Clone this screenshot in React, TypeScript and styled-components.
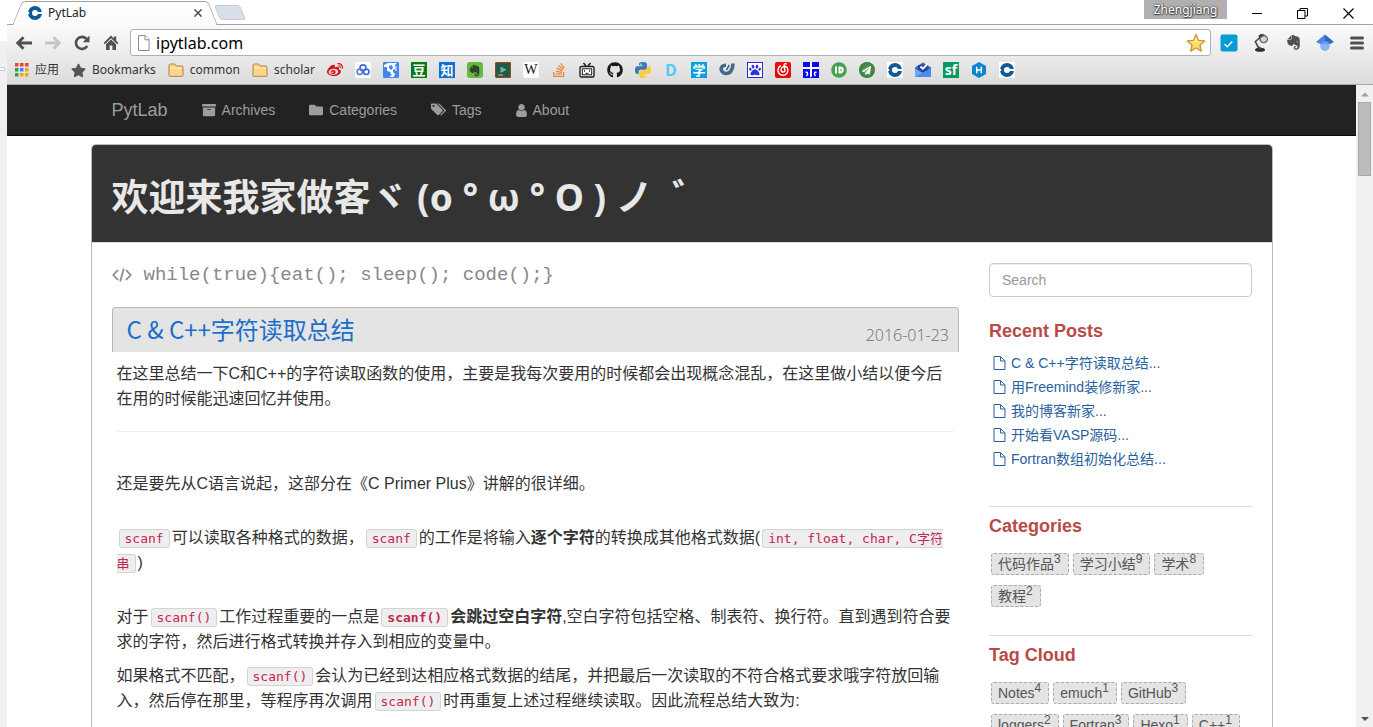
import React from "react";
import styled, { createGlobalStyle } from "styled-components";
import {
  FaArchive,
  FaEvernote,
  FaFolder,
  FaGithub,
  FaPaw,
  FaPaperPlane,
  FaStackOverflow,
  FaStar,
  FaWeibo,
} from "react-icons/fa";

const uiFont = '"Noto Sans", "Noto Sans CJK SC", sans-serif';
const pageFont = '"Liberation Sans", "Noto Sans CJK SC", sans-serif';
const monoFont = '"DejaVu Sans Mono", "Noto Sans CJK SC", monospace';

const GlobalStyle = createGlobalStyle`
  * { box-sizing: border-box; }
  body { margin: 0; background: #fff; font-family: ${pageFont}; overflow: hidden; }
  a { text-decoration: none; }
  svg { display: block; flex: none; }
`;

/* ---------- window ---------- */

const Desktop = styled.div`
  display: flex;
  height: 100vh;
`;

const DesktopEdge = styled.div`
  flex: none;
  width: 7px;
  padding-top: 67px;
  background: linear-gradient(#fff 41px, #f0f0f0 41px);
`;

const EdgeHandle = styled.div`
  width: 5px;
  height: 4px;
  background: #fff;
  border: 1px solid #ccc;
  border-left: 0;
`;

const Window = styled.div`
  flex: 1;
  min-width: 0;
  display: flex;
  flex-direction: column;
`;

const TitleBar = styled.div`
  display: flex;
  height: 24px;
  padding: 0 2px 0 10px;
`;

const Tab = styled.div`
  position: relative;
  z-index: 1;
  display: flex;
  align-items: center;
  width: 196px;
  height: 25px;
  padding: 1px 11px 0 10px;
  font: 12px/20px ${uiFont};
  color: #222;

  &::before,
  &::after {
    content: "";
    position: absolute;
    z-index: -1;
    top: 1px;
    bottom: 0;
    width: 60%;
    background: linear-gradient(#fff, #fbfbfb);
    border-top: 1px solid #a3a3a3;
  }
  &::before {
    left: 0;
    border-left: 1px solid #a3a3a3;
    border-top-left-radius: 4px;
    transform: skewX(-22deg);
  }
  &::after {
    right: 0;
    border-right: 1px solid #a3a3a3;
    border-top-right-radius: 4px;
    transform: skewX(22deg);
  }
`;

const TabTitle = styled.span`
  flex: 1;
  margin-left: 5px;
`;

const PlainButton = styled.button`
  display: flex;
  align-items: center;
  justify-content: center;
  padding: 0;
  border: 0;
  background: none;
  color: #4a4a4a;
`;

const NewTab = styled.button`
  width: 26px;
  height: 15px;
  margin: 5px 0 0 4px;
  padding: 0;
  border: 1px solid #c6ccd4;
  border-radius: 3px;
  background: #d9dfe8;
  transform: skewX(22deg);
`;

const UserBadge = styled.button`
  width: 83px;
  height: 19px;
  margin-left: auto;
  padding: 0;
  border: 0;
  background: #b0b0b0;
  color: #fff;
  font: 12px/19px ${uiFont};
  text-shadow: 0 0 2px #333, 0 1px 1px #444, 1px 0 1px #555;
`;

const WindowButtons = styled.div`
  display: flex;
  height: 26px;
  margin-left: 6px;
`;

const WindowButton = styled(PlainButton)`
  width: 46px;
  color: #000;
`;

const Toolbar = styled.div`
  flex: none;
  height: 61px;
  border-top: 1px solid #a3a3a3;
  border-bottom: 1px solid #a8a8a8;
  background: linear-gradient(#fafafa, #dcdcdc);
`;

const AddressRow = styled.div`
  display: flex;
  align-items: center;
  height: 35px;
  padding: 0 7px 0 8px;
`;

const NavButtons = styled.div`
  display: flex;
  gap: 11px;
  margin-right: 10px;
`;

const ToolButton = styled(PlainButton)<{ $faded?: boolean }>`
  width: 18px;
  height: 18px;
  color: ${(p) => (p.$faded ? "#c4c4c4" : "#505050")};
`;

const Omnibox = styled.div`
  flex: 1;
  display: flex;
  align-items: center;
  height: 27px;
  padding: 0 4px 0 7px;
  background: #fff;
  border: 1px solid #b0b0b0;
  border-radius: 3px;
`;

const Address = styled.input`
  flex: 1;
  min-width: 0;
  margin-left: 6px;
  padding: 0;
  border: 0;
  outline: 0;
  background: none;
  color: #000;
  font: 16px/24px ${uiFont};
`;

const Extensions = styled.div`
  display: flex;
  gap: 14px;
  margin-left: 9px;
`;

const BookmarkRow = styled.div`
  display: flex;
  align-items: center;
  gap: 12px;
  height: 20px;
  padding-left: 8px;
`;

const Bookmark = styled.a`
  display: flex;
  align-items: center;
  gap: 6px;
  color: #333;
  font: 12px/18px ${uiFont};
`;

const Favicon = styled.a<{ $bg?: string; $fg?: string; $size?: number; $serif?: boolean; $round?: number }>`
  flex: none;
  display: flex;
  align-items: center;
  justify-content: center;
  width: 16px;
  height: 16px;
  border-radius: ${(p) => p.$round ?? 0}px;
  background: ${(p) => p.$bg ?? "transparent"};
  color: ${(p) => p.$fg ?? "#fff"};
  font: ${(p) => (p.$serif ? "normal" : "bold")} ${(p) => p.$size ?? 13}px/16px
    ${(p) => (p.$serif ? '"Liberation Serif", serif' : '"Noto Sans", "Noto Sans CJK SC", sans-serif')};
`;

/* ---------- page ---------- */

const Viewport = styled.div`
  flex: 1;
  min-height: 0;
  display: flex;
`;

const Page = styled.div`
  flex: 1;
  min-width: 0;
  overflow: hidden;
`;

const ScrollTrack = styled.div`
  flex: none;
  display: flex;
  flex-direction: column;
  align-items: center;
  width: 17px;
  padding: 6px 0 5px;
  background: #f1f1f1;
`;

const ScrollThumb = styled.div`
  width: 13px;
  height: 74px;
  margin: 4px 0 auto;
  background: #bcbcbc;
  border: 1px solid #a8a8a8;
`;

const Container = styled.div`
  max-width: 1182px;
  margin: 0 auto;
`;

const SiteNav = styled.nav`
  height: 51px;
  background: #222;
  border-bottom: 1px solid #080808;
`;

const NavRow = styled(Container)`
  display: flex;
  align-items: center;
  gap: 34px;
  height: 50px;
  padding: 0 21px;
`;

const Brand = styled.a`
  color: #9d9d9d;
  font-size: 18px;
  line-height: 20px;
`;

const NavLink = styled.a`
  display: flex;
  align-items: center;
  gap: 6px;
  color: #9d9d9d;
  font-size: 14px;
  line-height: 20px;
`;

const Panel = styled(Container)`
  margin-top: 8px;
  border: 1px solid #bbb;
  border-radius: 5px 5px 0 0;
`;

const Hero = styled.header`
  height: 98px;
  padding: 25px 20px 0;
  background: #333;
  border-bottom: 1px solid #ddd;
  border-radius: 4px 4px 0 0;
`;

const HeroTitle = styled.h1`
  margin: 0;
  color: #e8e8e8;
  font: bold 37px/54px "Noto Sans", "Noto Sans CJK SC", sans-serif;
  white-space: pre;
`;

const Columns = styled.div`
  display: grid;
  grid-template-columns: 3fr 1fr;
  padding: 20px 5px 0;
`;

const Main = styled.main`
  min-width: 0;
  padding: 0 15px;
`;

const Sidebar = styled.aside`
  min-width: 0;
  padding: 0 15px;
`;

const Motto = styled.div`
  display: flex;
  align-items: center;
  gap: 12px;
  height: 24px;
  color: #888;
  font: 19px/24px "Liberation Mono", monospace;
`;

const PostHead = styled.header`
  display: flex;
  justify-content: space-between;
  height: 45px;
  margin-top: 20px;
  padding: 0 9px 0 14px;
  background: #e4e4e4;
  border: 1px solid #b8b8b8;
  border-bottom: 0;
  border-radius: 4px 4px 0 0;
`;

const PostTitle = styled.h2`
  margin: 0;
  font: normal 24px/42px "Noto Sans CJK SC", sans-serif;

  a { color: #1a6fca; }
`;

const PostDate = styled.time`
  margin-top: 14px;
  color: #6c6c6c;
  font: 300 16px/26px "Open Sans", sans-serif;
`;

const PostBody = styled.div`
  padding: 9px 5px 0;
  color: #333;
  font-size: 16px;
  line-height: 25px;
`;

const Para = styled.p<{ $after?: number }>`
  margin: 0 0 ${(p) => p.$after ?? 9}px;
`;

const Rule = styled.hr`
  margin: 20px 0 39px;
  border: 0;
  border-top: 1px solid #eee;
`;

const Code = styled.code`
  margin: 0 2px;
  padding: 1px 5px;
  border: 1px solid #d4d4d4;
  border-radius: 3px;
  background: #eee;
  color: #c7254e;
  font-family: ${monoFont};
  font-size: 13px;
  line-height: 16px;
`;

const Search = styled.input`
  display: block;
  width: 100%;
  height: 34px;
  padding: 6px 12px;
  border: 1px solid #ccc;
  border-radius: 4px;
  box-shadow: inset 0 1px 1px rgba(0, 0, 0, 0.075);
  font: 14px/20px ${pageFont};

  &::placeholder { color: #999; }
`;

const Widget = styled.section<{ $ruled?: boolean }>`
  margin-top: ${(p) => (p.$ruled ? 0 : 24)}px;
  border-top: ${(p) => (p.$ruled ? "1px solid #ddd" : "0")};
  padding-top: ${(p) => (p.$ruled ? 9 : 0)}px;
`;

const WidgetTitle = styled.h4`
  margin: 0;
  color: #b94a48;
  font-size: 18px;
  line-height: 20px;
`;

const PostList = styled.ul`
  margin: 10px 0 35px;
  padding: 0 0 0 4px;
  list-style: none;
`;

const PostLink = styled.a`
  display: flex;
  align-items: center;
  gap: 5px;
  height: 24px;
  color: #2a5f9e;
  font-size: 14px;
  line-height: 24px;
`;

const TagList = styled.div`
  display: flex;
  flex-wrap: wrap;
  gap: 10px 4px;
  padding: 17px 2px 28px;
`;

const Tag = styled.a`
  height: 22px;
  padding: 0 7px 0 6px;
  border: 1px dashed #aaa;
  border-radius: 3px;
  background: #e4e4e4;
  color: #555;
  font-size: 14px;
  line-height: 20px;

  sup { font-size: 12px; line-height: 0; }
`;

/* ---------- drawings ---------- */

const RingLogo = ({ size = 16 }: { size?: number }) => (
  <svg width={size} height={size} viewBox="0 0 16 16">
    <rect width="16" height="16" fill="#fff" />
    <circle cx="8" cy="8" r="5" fill="none" stroke="#0b5a96" strokeWidth="4" />
    <path d="M0 7h2.200v2H0zM10 7h6v2h-6z" fill="#fff" />
  </svg>
);

const ArrowIcon = ({ flip }: { flip?: boolean }) => (
  <svg width="18" height="18" viewBox="0 0 18 18" fill="none" stroke="currentColor" strokeWidth="2.800">
    <path d={flip ? "M1 9h14M9.500 3.200L15.300 9l-5.800 5.800" : "M17 9H3M8.500 3.200L2.700 9l5.800 5.800"} />
  </svg>
);

const ReloadIcon = () => (
  <svg width="18" height="18" viewBox="0 0 18 18">
    <path d="M14.200 11.800A6 6 0 1 1 13.400 4.800" fill="none" stroke="currentColor" strokeWidth="2.600" />
    <path d="M16.500 1.500v6.800H9.700z" fill="currentColor" />
  </svg>
);

const HomeIcon = () => (
  <svg width="18" height="18" viewBox="0 0 18 18" fill="currentColor">
    <path d="M9 1.600L1.600 9l1.200 1.300L9 4.300l6.200 6 1.200-1.300-2.200-2.200V2.600h-2.400v1.800z" />
    <path d="M4 10.300l5-4.700 5 4.700V16h-3.600v-4.400H7.600V16H4z" />
  </svg>
);

const PageIcon = () => (
  <svg width="12" height="16" viewBox="0 0 12 16" fill="#fff" stroke="#8a8a8a">
    <path d="M.5.5h6.600l4 4v11H.5z" />
    <path d="M7 .5v4.300h4.200" />
  </svg>
);

const GoldStar = () => (
  <svg width="20" height="20" viewBox="0 0 20 20">
    <defs>
      <linearGradient id="gold" x1="0" y1="0" x2="0" y2="1">
        <stop offset="0" stopColor="#fff6b0" />
        <stop offset="1" stopColor="#f9cf45" />
      </linearGradient>
    </defs>
    <path
      d="M10 1.600l2.500 5.700 6.100.6-4.600 4.100 1.300 6.100-5.300-3.100-5.300 3.100L6 12 1.400 7.900l6.100-.6z"
      fill="url(#gold)"
      stroke="#cf922f"
      strokeWidth="1.300"
      strokeLinejoin="round"
    />
  </svg>
);

const CheckExt = () => (
  <svg width="18" height="18" viewBox="0 0 18 18">
    <rect x=".5" y=".5" width="17" height="17" rx="2" fill="#0a9bd3" />
    <path d="M4.500 10l2.800 2.800 5-5.300" fill="none" stroke="#fff" strokeWidth="1.400" />
  </svg>
);

const LampExt = () => (
  <svg width="18" height="20" viewBox="0 0 18 20">
    <path d="M7 15.500L3.300 8.600 9 3.500" fill="none" stroke="#4c4c4c" strokeWidth="1.600" />
    <path d="M6.500 2.500l3-1.800 4 1.300-2 6.500-4-2.600z" fill="#3c3c3c" />
    <ellipse cx="11.800" cy="6.300" rx="3.700" ry="3.300" fill="#d4d4d4" stroke="#6a6a6a" strokeWidth="1.400" transform="rotate(-20 11.800 6.300)" />
    <ellipse cx="8" cy="16.800" rx="5" ry="2" fill="#2d2d2d" />
    <path d="M6 14l3 1.300" stroke="#555" strokeWidth="2" />
  </svg>
);

const ScholarExt = () => (
  <svg width="18" height="18" viewBox="0 0 18 18">
    <path d="M9 .5L0 8l5 2.500L9 9z" fill="#4b84ee" />
    <path d="M9 .5L18 8l-5 2.500L9 9z" fill="#3567c5" />
    <circle cx="9" cy="12.200" r="4.800" fill="#8db5f5" />
    <path d="M4.600 10.200a4.900 4.900 0 0 1 8.800 0z" fill="#6c9df2" />
  </svg>
);

const MenuIcon = () => (
  <svg width="14" height="14" viewBox="0 0 14 14" stroke="#505050" strokeWidth="3" strokeLinecap="round">
    <path d="M1.500 2h11M1.500 7h11M1.500 12h11" />
  </svg>
);

const AppsIcon = () => {
  const colors = ["#e8453c", "#e8453c", "#e8453c", "#2e9e57", "#3f83f0", "#f2a60c", "#2e9e57", "#f2a60c", "#f2a60c"];
  return (
    <svg width="14" height="14" viewBox="0 0 14 14">
      {colors.map((c, i) => (
        <rect key={i} x={(i % 3) * 5} y={Math.floor(i / 3) * 5} width="3.500" height="3.500" fill={c} />
      ))}
    </svg>
  );
};

const FolderIcon = () => (
  <svg width="16" height="14" viewBox="0 0 16 14">
    <path d="M1 12.500v-10q0-1.500 1.500-1.500h4q1 0 1.500 2h6q1 0 1 1v8.500q0 .8-.8.8H1.800q-.8 0-.8-.8z" fill="#fbd58a" stroke="#b58043" />
    <path d="M2 5h12" stroke="#fff0cf" />
  </svg>
);

const CloudFav = () => (
  <svg width="16" height="16" viewBox="0 0 16 16" fill="none" strokeWidth="1.600">
    <circle cx="8" cy="5.800" r="2.900" stroke="#2e6be6" />
    <circle cx="4.700" cy="9.800" r="2.700" stroke="#3f86f2" />
    <circle cx="11.300" cy="9.800" r="2.700" stroke="#2e6be6" />
    <circle cx="6.600" cy="8" r="1.300" fill="#e5473c" />
  </svg>
);

const ScholarFav = () => (
  <svg width="16" height="16" viewBox="0 0 16 16">
    <rect width="16" height="16" rx="1" fill="#4285f4" />
    <path d="M1 3l4-2h9l-2 2v4l-2 1v2l2 2-1 3H6l3-2-2-2 1-1-4-1V5H1z" fill="#fff" />
    <path d="M6 4l3-1 1 3-2 2-2-2z" fill="#4285f4" />
    <path d="M13 4v5" stroke="#fff" />
  </svg>
);

const BoardFav = () => (
  <svg width="16" height="16" viewBox="0 0 16 16">
    <rect x=".5" y=".5" width="15" height="15" rx="1.500" fill="#1d5a49" stroke="#8c4c1d" strokeWidth="1.400" />
    <path d="M5.500 4.500l6 3.200-6 3.200z" fill="#7fae92" />
    <path d="M3 13h5" stroke="#d8c27a" />
  </svg>
);

const TvFav = () => (
  <svg width="16" height="16" viewBox="0 0 16 16" fill="none" stroke="#1a1a1a">
    <rect x="1" y="4.500" width="14" height="10.500" rx="1.500" fill="#fff" strokeWidth="1.400" />
    <rect x="3.300" y="6.800" width="9.400" height="6" />
    <path d="M4.500 1L7 4M11.500 1L9 4" strokeWidth="1.500" />
    <path d="M5.500 8.300v1.500M10.500 8.300v1.500M6.500 11.300h3" />
  </svg>
);

const snake =
  "M14.25.18l.9.2.73.26.59.3.45.32.34.34.25.34.16.33.1.3.04.26.02.2-.01.13V8.5l-.05.63-.13.55-.21.46-.26.38-.3.31-.33.25-.35.19-.35.14-.33.1-.3.07-.26.04-.21.02H8.77l-.69.05-.59.14-.5.22-.41.27-.33.32-.27.35-.2.36-.15.37-.1.35-.07.32-.04.27-.02.21v3.06H3.17l-.21-.03-.28-.07-.32-.12-.35-.18-.36-.26-.36-.36-.35-.46-.32-.59-.28-.73-.21-.88-.14-1.05-.05-1.23.06-1.22.16-1.04.24-.87.32-.71.36-.57.4-.44.42-.33.42-.24.4-.16.36-.1.32-.05.24-.01h.16l.06.01h8.16v-.83H6.18l-.01-2.75-.02-.37.05-.34.11-.31.17-.28.25-.26.31-.23.38-.2.44-.18.51-.15.58-.12.64-.1.71-.06.77-.04.84-.02 1.27.05z";

const PythonFav = () => (
  <svg width="16" height="16" viewBox="0 0 24 24">
    <path d={snake} fill="#3d7ab3" />
    <path d={snake} fill="#fdcb3c" transform="rotate(180 12 12)" />
    <circle cx="8.800" cy="3.200" r="1.100" fill="#fff" />
    <circle cx="15.200" cy="20.800" r="1.100" fill="#fff" />
  </svg>
);

const HookFav = () => (
  <svg width="16" height="16" viewBox="0 0 16 16" fill="none" stroke="#426a8c" strokeWidth="3.600">
    <path d="M7 3.200C2.500 3.200 1.500 6.500 2.600 8.800c1.800 3.600 7 3.600 9.400.2C13.500 7 14 4.500 14 1.500" />
    <path d="M7.500 8l2.800-5" strokeWidth="1.600" />
  </svg>
);

const CloudMusicFav = () => (
  <svg width="16" height="16" viewBox="0 0 16 16">
    <rect width="16" height="16" rx="2" fill="#e60a0a" />
    <g fill="none" stroke="#fff" strokeWidth="1.400">
      <path d="M6 3.700a5 5 0 1 0 5.500 1.100C10 3.700 6 4.800 6 8c0 2.600 4 2.600 4 0L9 3c0-1.500 2-1.800 2.800-.8" />
    </g>
  </svg>
);

const CrossFav = () => (
  <svg width="16" height="16" viewBox="0 0 16 16">
    <rect width="16" height="16" fill="#0a0af0" />
    <path d="M7 0h2v5h7v2H9v7q0 1.500-2 1V7H0V5h7z" fill="#fff" />
    <path d="M2.500 10.500c2-1 3 1 1 3.500M13.500 10.500c-2-1-3 1-1 3.500" fill="none" stroke="#fff" strokeWidth="1.400" />
  </svg>
);

const PushFav = () => (
  <svg width="16" height="16" viewBox="0 0 16 16">
    <circle cx="8" cy="8" r="7.800" fill="#43a251" />
    <path d="M5 4.500v7" stroke="#fff" strokeWidth="2" />
    <path d="M8.500 5.500v5h.800a2.500 2.500 0 0 0 0-5z" fill="none" stroke="#fff" strokeWidth="2" />
  </svg>
);

const InboxFav = () => (
  <svg width="16" height="16" viewBox="0 0 16 16">
    <path d="M0 5.500L8 .5l8 5V15H0z" fill="#3a5fc0" />
    <path d="M3 3h10v6l-5 2-5-2z" fill="#2a4699" />
    <path d="M5.500 4.500l2.300 2.300L12.500 2" fill="none" stroke="#fff" strokeWidth="1.800" />
    <path d="M0 6.500l8 4.500 8-4.500V15H0z" fill="#6fa8f8" />
    <path d="M0 15l8-4.500L16 6.500V15z" fill="#4a8af2" />
  </svg>
);

const HexFav = () => (
  <svg width="16" height="16" viewBox="0 0 16 16">
    <path d="M8 0l7 4v8l-7 4-7-4V4z" fill="#0e83cd" />
    <path d="M5.700 4.700v6.600M10.300 4.700v6.600M5.700 8h4.600" stroke="#fff" strokeWidth="1.500" />
  </svg>
);

const TagsIcon = () => (
  <svg width="15" height="14" viewBox="0 128 1920 1664" fill="currentColor">
    <path d="M448 448q0-53-37.5-90.5t-90.5-37.5-90.500 37.500-37.500 90.500 37.500 90.500 90.500 37.500 90.500-37.500 37.500-90.500zm1067 576q0 53-37 90l-491 492q-39 37-91 37-53 0-90-37l-715-716q-38-37-64.500-101t-26.500-117v-416q0-52 38-90t90-38h416q53 0 117 26.500t102 64.500l715 714q37 39 37 91zm384 0q0 53-37 90l-491 492q-39 37-91 37-36 0-59-14t-53-45l470-470q37-37 37-90 0-52-37-91l-715-714q-38-38-102-64.500t-117-26.500h224q53 0 117 26.500t102 64.500l715 714q37 39 37 91z" />
  </svg>
);

const UserIcon = () => (
  <svg width="11" height="13" viewBox="256 128 1280 1536" fill="currentColor">
    <path d="M1536 1399q0 109-62.500 187t-150.500 78h-854q-88 0-150.500-78t-62.500-187q0-85 8.500-160.500t31.500-152 58.500-131 94-89 134.500-34.500q131 128 313 128t313-128q76 0 134.500 34.500t94 89 58.500 131 31.500 152 8.500 160.500zm-256-887q0 159-112.500 271.500t-271.500 112.500-271.500-112.500-112.500-271.500 112.500-271.500 271.500-112.500 271.500 112.500 112.500 271.500z" />
  </svg>
);

const FileOutline = () => (
  <svg width="13" height="14" viewBox="0 0 13 14" fill="none" stroke="currentColor">
    <path d="M1 .5h6.500l4.500 4.300v8.700H1z" />
    <path d="M7.500.5v4.500H12" />
  </svg>
);

const CodeMark = () => (
  <svg width="20" height="16" viewBox="0 0 20 16" fill="none" stroke="currentColor" strokeWidth="1.700">
    <path d="M6 3L1.300 8 6 13M14 3l4.700 5-4.700 5M11.800 1.500L8.200 14.500" />
  </svg>
);

const Minimize = () => (
  <svg width="11" height="11" viewBox="0 0 11 11" stroke="#000">
    <path d="M1 5.500h10" />
  </svg>
);

const Restore = () => (
  <svg width="11" height="11" viewBox="0 0 11 11" fill="none" stroke="#000">
    <path d="M.5 2.500h7.500v8H.5zM3 2.500V.5h7.500v7.500H8" />
  </svg>
);

const Close = ({ size = 11, weight = 1.2 }: { size?: number; weight?: number }) => (
  <svg width={size} height={size} viewBox="0 0 11 11" stroke="currentColor" strokeWidth={weight}>
    <path d="M.5.5l10 10M10.500.5l-10 10" />
  </svg>
);

const Triangle = ({ down }: { down?: boolean }) => (
  <svg width="8" height="7" viewBox="0 0 8 7">
    <path d={down ? "M0 2h8L4 6z" : "M0 5.500h8L4 1.500z"} fill={down ? "#505050" : "#a3a3a3"} />
  </svg>
);

/* ---------- data ---------- */

const recentPosts = ["C & C++字符读取总结...", "用Freemind装修新家...", "我的博客新家...", "开始看VASP源码...", "Fortran数组初始化总结..."];

const categories: [string, number][] = [["代码作品", 3], ["学习小结", 9], ["学术", 8], ["教程", 2]];

const tags: [string, number][] = [
  ["Notes", 4],
  ["emuch", 1],
  ["GitHub", 3],
  ["loggers", 2],
  ["Fortran", 3],
  ["Hexo", 1],
  ["C++", 1],
];

const Tags = ({ items }: { items: [string, number][] }) => (
  <TagList>
    {items.map(([name, count]) => (
      <Tag href="#" key={name}>
        {name}
        <sup>{count}</sup>
      </Tag>
    ))}
  </TagList>
);

const Browser = () => (
  <>
    <TitleBar>
      <Tab>
        <RingLogo />
        <TabTitle>PytLab</TabTitle>
        <PlainButton aria-label="Close tab">
          <Close size={8} weight={2} />
        </PlainButton>
      </Tab>
      <NewTab aria-label="New tab" />
      <UserBadge>Zhengjiang</UserBadge>
      <WindowButtons>
        <WindowButton aria-label="Minimize"><Minimize /></WindowButton>
        <WindowButton aria-label="Restore"><Restore /></WindowButton>
        <WindowButton aria-label="Close"><Close /></WindowButton>
      </WindowButtons>
    </TitleBar>
    <Toolbar>
      <AddressRow>
        <NavButtons>
          <ToolButton aria-label="Back"><ArrowIcon /></ToolButton>
          <ToolButton aria-label="Forward" $faded><ArrowIcon flip /></ToolButton>
          <ToolButton aria-label="Reload"><ReloadIcon /></ToolButton>
          <ToolButton aria-label="Home"><HomeIcon /></ToolButton>
        </NavButtons>
        <Omnibox>
          <PageIcon />
          <Address aria-label="Address" defaultValue="ipytlab.com" />
          <PlainButton aria-label="Bookmark this page"><GoldStar /></PlainButton>
        </Omnibox>
        <Extensions>
          <ToolButton aria-label="Tasks"><CheckExt /></ToolButton>
          <ToolButton aria-label="Lamp"><LampExt /></ToolButton>
          <ToolButton aria-label="Evernote"><FaEvernote size={17} /></ToolButton>
          <ToolButton aria-label="Scholar"><ScholarExt /></ToolButton>
          <ToolButton aria-label="Menu"><MenuIcon /></ToolButton>
        </Extensions>
      </AddressRow>
      <BookmarkRow>
        <Bookmark href="#"><AppsIcon />应用</Bookmark>
        <Bookmark href="#"><FaStar size={15} color="#555" />Bookmarks</Bookmark>
        <Bookmark href="#"><FolderIcon />common</Bookmark>
        <Bookmark href="#"><FolderIcon />scholar</Bookmark>
        <Favicon href="#" aria-label="Weibo" $fg="#d8131f"><FaWeibo size={16} /></Favicon>
        <Favicon href="#" aria-label="Cloud" $bg="#fff" $round={2}><CloudFav /></Favicon>
        <Favicon href="#" aria-label="Google Scholar"><ScholarFav /></Favicon>
        <Favicon href="#" $bg="#077a17">豆</Favicon>
        <Favicon href="#" $bg="#0f6fd2">知</Favicon>
        <Favicon href="#" aria-label="Evernote" $bg="#62bb3c" $fg="#34402f" $round={3}><FaEvernote size={13} /></Favicon>
        <Favicon href="#" aria-label="Board"><BoardFav /></Favicon>
        <Favicon href="#" $bg="#fff" $fg="#111" $serif $size={14} $round={2}>W</Favicon>
        <Favicon href="#" aria-label="Stack Overflow" $fg="#ee8236"><FaStackOverflow size={16} /></Favicon>
        <Favicon href="#" aria-label="Bilibili"><TvFav /></Favicon>
        <Favicon href="#" aria-label="GitHub" $fg="#191717"><FaGithub size={16} /></Favicon>
        <Favicon href="#" aria-label="Python"><PythonFav /></Favicon>
        <Favicon href="#" $fg="#56c8f5" $size={16}>D</Favicon>
        <Favicon href="#" $bg="#0a9fe0">学</Favicon>
        <Favicon href="#" aria-label="Hook"><HookFav /></Favicon>
        <Favicon href="#" aria-label="Baidu" $bg="linear-gradient(#fff, #fff) center / 14px 14px no-repeat #2b2bdc" $fg="#2b35dc"><FaPaw size={12} /></Favicon>
        <Favicon href="#" aria-label="Music"><CloudMusicFav /></Favicon>
        <Favicon href="#" aria-label="Library"><CrossFav /></Favicon>
        <Favicon href="#" aria-label="Pushbullet"><PushFav /></Favicon>
        <Favicon href="#" aria-label="Send" $bg="radial-gradient(#5aa85a, #2a6b2e)" $round={8}><FaPaperPlane size={9} /></Favicon>
        <Favicon href="#" aria-label="PytLab"><RingLogo /></Favicon>
        <Favicon href="#" aria-label="Inbox"><InboxFav /></Favicon>
        <Favicon href="#" $bg="#069a60" $size={14}>sf</Favicon>
        <Favicon href="#" aria-label="Hexo"><HexFav /></Favicon>
        <Favicon href="#" aria-label="PytLab"><RingLogo /></Favicon>
      </BookmarkRow>
    </Toolbar>
  </>
);

const Post = () => (
  <article>
    <PostHead>
      <PostTitle><a href="#">C &amp; C++字符读取总结</a></PostTitle>
      <PostDate dateTime="2016-01-23">2016-01-23</PostDate>
    </PostHead>
    <PostBody>
      <Para $after={0}>
        在这里总结一下C和C++的字符读取函数的使用，主要是我每次要用的时候都会出现概念混乱，在这里做小结以便今后在用的时候能迅速回忆并使用。
      </Para>
      <Rule />
      <Para $after={29}>还是要先从C语言说起，这部分在《C Primer Plus》讲解的很详细。</Para>
      <Para $after={29}>
        <Code>scanf</Code>可以读取各种格式的数据，<Code>scanf</Code>的工作是将输入<b>逐个字符</b>的转换成其他格式数据(
        <Code>int, float, char, C字符串</Code>)
      </Para>
      <Para>
        对于<Code>scanf()</Code>工作过程重要的一点是<b><Code>scanf()</Code>会跳过空白字符</b>,空白字符包括空格、制表符、换行符。直到遇到符合要求的字符，然后进行格式转换并存入到相应的变量中。
      </Para>
      <Para>
        如果格式不匹配，<Code>scanf()</Code>会认为已经到达相应格式数据的结尾，并把最后一次读取的不符合格式要求哦字符放回输入，然后停在那里，等程序再次调用<Code>scanf()</Code>时再重复上述过程继续读取。因此流程总结大致为:
      </Para>
    </PostBody>
  </article>
);

export default function App() {
  return (
    <Desktop>
      <GlobalStyle />
      <DesktopEdge><EdgeHandle /></DesktopEdge>
      <Window>
        <Browser />
        <Viewport>
          <Page>
            <SiteNav>
              <NavRow>
                <Brand href="#">PytLab</Brand>
                <NavLink href="#"><FaArchive size={14} />Archives</NavLink>
                <NavLink href="#"><FaFolder size={14} />Categories</NavLink>
                <NavLink href="#"><TagsIcon />Tags</NavLink>
                <NavLink href="#"><UserIcon />About</NavLink>
              </NavRow>
            </SiteNav>
            <Panel>
              <Hero><HeroTitle>欢迎来我家做客ヾ (o ° ω ° O ) ノ  ゛</HeroTitle></Hero>
              <Columns>
                <Main>
                  <Motto><CodeMark />{"while(true){eat(); sleep(); code();}"}</Motto>
                  <Post />
                </Main>
                <Sidebar>
                  <Search type="search" placeholder="Search" aria-label="Search" />
                  <Widget>
                    <WidgetTitle>Recent Posts</WidgetTitle>
                    <PostList>
                      {recentPosts.map((title) => (
                        <li key={title}><PostLink href="#"><FileOutline />{title}</PostLink></li>
                      ))}
                    </PostList>
                  </Widget>
                  <Widget $ruled>
                    <WidgetTitle>Categories</WidgetTitle>
                    <Tags items={categories} />
                  </Widget>
                  <Widget $ruled>
                    <WidgetTitle>Tag Cloud</WidgetTitle>
                    <Tags items={tags} />
                  </Widget>
                </Sidebar>
              </Columns>
            </Panel>
          </Page>
          <ScrollTrack>
            <Triangle />
            <ScrollThumb />
            <Triangle down />
          </ScrollTrack>
        </Viewport>
      </Window>
    </Desktop>
  );
}
